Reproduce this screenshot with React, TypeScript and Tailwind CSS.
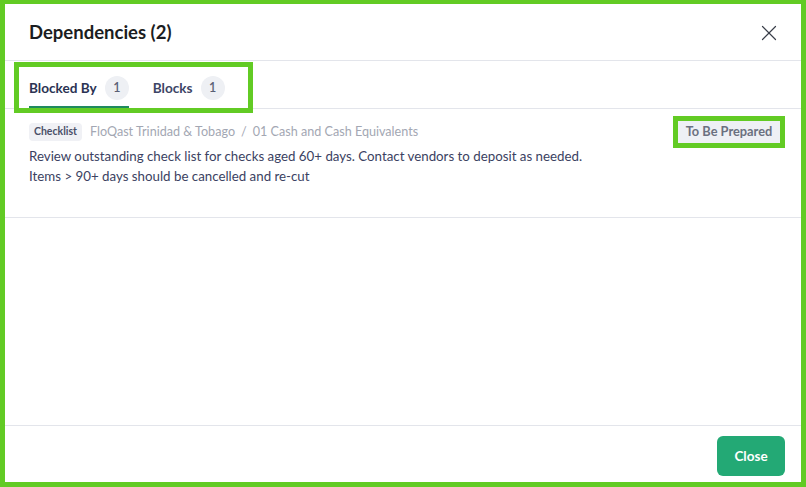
import { X } from 'lucide-react'

function CountBadge({ n }: { n: number }) {
  return (
    <span className="ml-2 flex h-6 w-6 items-center justify-center rounded-full bg-[#eef0f4] text-[12.5px] font-semibold text-[#5a6074]">
      {n}
    </span>
  )
}

export default function App() {
  return (
    <div
      className="flex h-[487px] w-[806px] flex-col border-[5px] border-t-4 border-[#62cb24] bg-white text-[#2b3353]"
      style={{ fontFamily: 'Lato, "Open Sans", sans-serif' }}
    >
      {/* Header */}
      <div className="flex h-[57px] shrink-0 items-center justify-between border-b border-[#e3e5eb] pl-6 pr-[19px] pt-[2px]">
        <h1 className="text-[18.5px] font-bold text-[#1b1d21]">Dependencies (2)</h1>
        <X className="h-[26px] w-[26px] text-[#3a3f4a]" strokeWidth={1.1} />
      </div>

      {/* Tabs */}
      <div className="h-[48px] shrink-0 border-b border-[#e3e5eb]">
        <div className="ml-[14px] mt-[6px] flex h-[41px] w-fit items-center pl-[10px] pr-[23px] outline-[5px] outline-[#62cb24]">
          <div className="flex h-full items-center border-b-2 border-[#1f8a5f] pt-[3px]">
            <span className="text-[13.6px] font-bold text-[#2b3353]">Blocked By</span>
            <CountBadge n={1} />
          </div>
          <div className="ml-6 flex h-full items-center border-b-2 border-transparent pt-[3px]">
            <span className="text-[13.6px] font-bold text-[#3d4566]">Blocks</span>
            <CountBadge n={1} />
          </div>
        </div>
      </div>

      {/* Dependency item */}
      <div className="shrink-0 border-b border-[#e3e5eb] pb-[31px] pl-6 pr-[21px] pt-[12px]">
        <div className="flex h-[22px] items-center justify-between">
          <div className="flex items-center">
            <span className="flex h-[18px] items-center rounded bg-[#f0f1f5] px-[5px] text-[10.5px] font-bold text-[#4a5068]">
              Checklist
            </span>
            <span className="ml-2 text-[12.6px] text-[#a3a7b3]">
              FloQast Trinidad &amp; Tobago<span className="mx-[6px]">/</span>01 Cash and Cash Equivalents
            </span>
          </div>
          <span className="flex h-[22px] w-[102px] items-center justify-center bg-[#eef0f5] text-[12.8px] font-bold text-[#6b7080] outline-[5px] outline-[#62cb24]">
            To Be Prepared
          </span>
        </div>
        <p className="mt-[3px] text-[13.3px] leading-5 text-[#3b4262]">
          Review outstanding check list for checks aged 60+ days. Contact vendors to deposit as needed.
          <br />
          Items &gt; 90+ days should be cancelled and re-cut
        </p>
      </div>

      <div className="flex-1" />

      {/* Footer */}
      <div className="flex h-[57px] shrink-0 justify-end border-t border-[#e3e5eb] pr-[16px] pt-[10px]">
        <button className="h-10 w-[68px] rounded-md bg-[#23a975] text-[13.5px] font-bold text-white">
          Close
        </button>
      </div>
    </div>
  )
}
